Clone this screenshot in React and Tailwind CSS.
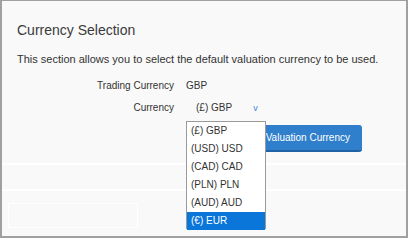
const options = ['(£) GBP', '(USD) USD', '(CAD) CAD', '(PLN) PLN', '(AUD) AUD', '(€) EUR']

export default function App() {
  return (
    <div className="w-[410px] h-[239px] bg-white font-['Liberation_Sans',Arial,sans-serif] text-[#333]">
      <div className="relative w-[408px] h-[238px] border-2 border-t border-[#a0a0a0] bg-[#f9f9f9]">
        <div className="pl-[15px]">
          <h1 className="mt-[21px] h-[16px] text-[14px] leading-[16px] text-[#3a3a3a]">Currency Selection</h1>
          <p className="mt-[15px] h-[13px] text-[11px] leading-[13px]">
            This section allows you to select the default valuation currency to be used.
          </p>
        </div>

        <div className="mt-[14px] flex text-[10px] leading-[12px]">
          <div className="w-[172px] text-right">Trading Currency</div>
          <div className="pl-[12px]">GBP</div>
        </div>

        <div className="mt-[10px] flex text-[10px] leading-[12px]">
          <div className="w-[172px] text-right">Currency</div>
          <div className="pl-[22px] flex">
            <span>(£) GBP</span>
            <span className="ml-[21px] text-[9px] text-[#3d85d8]">v</span>
          </div>
        </div>

        <div className="mt-[11px] flex justify-end pr-[44px]">
          <button className="h-[27px] px-[12px] rounded-[3px] bg-[#2f7fcc] border-b-2 border-[#1f62a6] text-white text-[10px] leading-[12px]">
            Set Valuation Currency
          </button>
        </div>

        <div className="mt-[11px] border-t-2 border-white" />
        <div className="h-[24px]" />
        <div className="border-t-2 border-white" />
        <div className="mt-[12px] ml-[6px] w-[130px] h-[25px] border border-white" />

        <ul className="absolute left-[184px] top-[120px] w-[80px] h-[108px] bg-white border border-[#9a9a9a] text-[10px] leading-[18px]">
          {options.map((o) => (
            <li
              key={o}
              className={o === '(€) EUR' ? 'h-[18px] pl-[4px] bg-[#0b76d9] text-white' : 'h-[18px] pl-[4px] text-[#333]'}
            >
              {o}
            </li>
          ))}
        </ul>
      </div>
    </div>
  )
}
